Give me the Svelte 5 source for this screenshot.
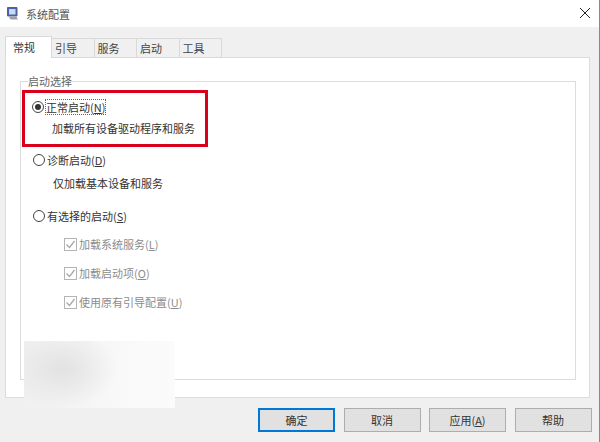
<script>
  const tabs = ['常规', '引导', '服务', '启动', '工具']
  const services = [
    { label: '加载系统服务', key: 'L' },
    { label: '加载启动项', key: 'O' },
    { label: '使用原有引导配置', key: 'U' }
  ]
  const buttons = [
    { label: '确定', primary: true },
    { label: '取消' },
    { label: '应用', key: 'A' },
    { label: '帮助' }
  ]
</script>

<div class="dialog">
  <header class="titlebar">
    <svg class="app-icon" viewBox="0 0 13 13" width="13" height="13" aria-hidden="true">
      <path d="M1.5 .5h9.5v8.5H1.5z" fill="#4a5fae" stroke="#59617f" />
      <path d="M3 2h6.5v5.5H3z" fill="#c7daf3" />
      <path d="M3 10h7.5l1.5 2.5H4.500z" fill="#9aa0ab" />
    </svg>
    <span class="title">系统配置</span>
    <svg class="close" viewBox="0 0 12 12" width="12" height="12" aria-hidden="true">
      <path d="M1 1l10 10M11 1L1 11" stroke="#222" stroke-width="1" fill="none" />
    </svg>
  </header>

  <div class="body">
    <div class="tabs">
      {#each tabs as tab, i}
        <span class="tab" class:active={i === 0}>{tab}</span>
      {/each}
    </div>

    <div class="panel">
      <fieldset class="group">
        <legend>启动选择</legend>

        <div class="highlight">
          <div class="radio-row">
            <span class="radio checked"></span>
            <span class="focus">正常启动(<u>N</u>)</span>
          </div>
          <p class="hint">加载所有设备驱动程序和服务</p>
        </div>

        <div class="radio-row second">
          <span class="radio"></span>
          <span>诊断启动(<u>D</u>)</span>
        </div>
        <p class="hint">仅加载基本设备和服务</p>

        <div class="radio-row third">
          <span class="radio"></span>
          <span>有选择的启动(<u>S</u>)</span>
        </div>

        <div class="checks">
          {#each services as item}
            <div class="check-row">
              <svg class="check" viewBox="0 0 13 13" width="13" height="13" aria-hidden="true">
                <rect x="0.5" y="0.5" width="12" height="12" fill="#fff" stroke="#b4b4b4" />
                <path d="M2.5 6.500l3 3 5-6.500" fill="none" stroke="#a8a8a8" stroke-width="1.3" />
              </svg>
              <span>{item.label}(<u>{item.key}</u>)</span>
            </div>
          {/each}
        </div>
      </fieldset>
    </div>

    <footer class="actions">
      {#each buttons as btn}
        <button type="button" class:primary={btn.primary}>
          {btn.label}{#if btn.key}(<u>{btn.key}</u>){/if}
        </button>
      {/each}
    </footer>

    <div class="smudge"></div>
  </div>
</div>

<style>
  :global(body) {
    margin: 0;
    background: #fff;
  }

  .dialog {
    position: relative;
    box-sizing: border-box;
    width: 600px;
    height: 442px;
    display: flex;
    flex-direction: column;
    border-right: 1px solid #4a9bd0;
    font-family: "Noto Sans CJK SC", "Liberation Sans", sans-serif;
    font-size: 11px;
    color: #333;
    overflow: hidden;
  }

  .titlebar {
    height: 27px;
    flex: none;
    display: flex;
    align-items: center;
    padding: 0 8px 0 6px;
    background: #fff;
  }

  .app-icon {
    margin: 0 7px 1px 0;
  }

  .title {
    flex: 1;
    color: #555;
  }

  .close {
    margin-bottom: 2px;
  }

  .body {
    position: relative;
    flex: 1;
    display: flex;
    flex-direction: column;
    padding: 0 5px;
    background: #f0f0f0;
  }

  .tabs {
    display: flex;
    height: 31px;
    align-items: flex-end;
    box-sizing: border-box;
    position: relative;
    z-index: 1;
    margin-bottom: -1px;
  }

  .tab {
    box-sizing: border-box;
    width: 42.5px;
    height: 20px;
    display: flex;
    align-items: center;
    padding-left: 3px;
    border: 1px solid #d9d9d9;
    border-left: 0;
    background: #f0f0f0;
    color: #444;
  }

  .tab.active {
    width: 47px;
    height: 22px;
    padding: 0 0 2px 7px;
    border: 1px solid #d9d9d9;
    border-bottom: 0;
    background: #fff;
    color: #333;
  }

  .panel {
    box-sizing: border-box;
    height: 341px;
    width: 585px;
    padding: 16px 13px 17px 14px;
    border: 1px solid #dcdcdc;
    background: #fff;
  }

  .group {
    box-sizing: border-box;
    height: 100%;
    margin: 0;
    padding: 0 0 0 1px;
    border: 1px solid #dcdcdc;
  }

  legend {
    margin-left: 6px;
    padding: 0;
    line-height: 14px;
    color: #666;
  }

  .highlight {
    box-sizing: border-box;
    width: 186px;
    height: 57px;
    margin-top: 2px;
    padding: 6px 0 0 7px;
    border: 3px solid #d9001b;
  }

  .radio-row {
    display: flex;
    align-items: center;
    height: 16px;
    gap: 2px;
  }

  .radio-row.second {
    margin: 5px 0 0 11px;
  }

  .radio-row.third {
    margin: 17px 0 0 11px;
  }

  .radio {
    box-sizing: border-box;
    width: 12px;
    height: 12px;
    border: 1px solid #444;
    border-radius: 50%;
    background: #fff;
    display: grid;
    place-items: center;
  }

  .radio.checked::after {
    content: "";
    width: 6px;
    height: 6px;
    border-radius: 50%;
    background: #333;
  }

  .focus {
    outline: 1px dotted #666;
    line-height: 14px;
  }

  .hint {
    margin: 5px 0 0 20px;
    line-height: 16px;
  }

  .second + .hint {
    margin: 7px 0 0 31px;
  }

  .checks {
    display: flex;
    flex-direction: column;
    gap: 13px;
    margin: 12px 0 0 42px;
    color: #8c8c8c;
  }

  .check-row {
    display: flex;
    align-items: center;
    height: 16px;
    gap: 2px;
  }

  .actions {
    display: flex;
    gap: 8.5px;
    margin-top: 10px;
    padding-left: 253px;
  }

  button {
    box-sizing: border-box;
    width: 77px;
    height: 24px;
    padding: 0;
    border: 1px solid #adadad;
    background: #e1e1e1;
    font: inherit;
    color: #333;
  }

  button.primary {
    border: 2px solid #0078d7;
  }

  .smudge {
    position: absolute;
    left: 24px;
    top: 314px;
    width: 151px;
    height: 67px;
    background:
      radial-gradient(ellipse 55px 40px at 38px 28px, #e2e2e2, rgba(235, 235, 235, 0) 100%),
      linear-gradient(90deg, #f0f0f0, #f9f9f9 70%, #fbfbfb);
  }
</style>
